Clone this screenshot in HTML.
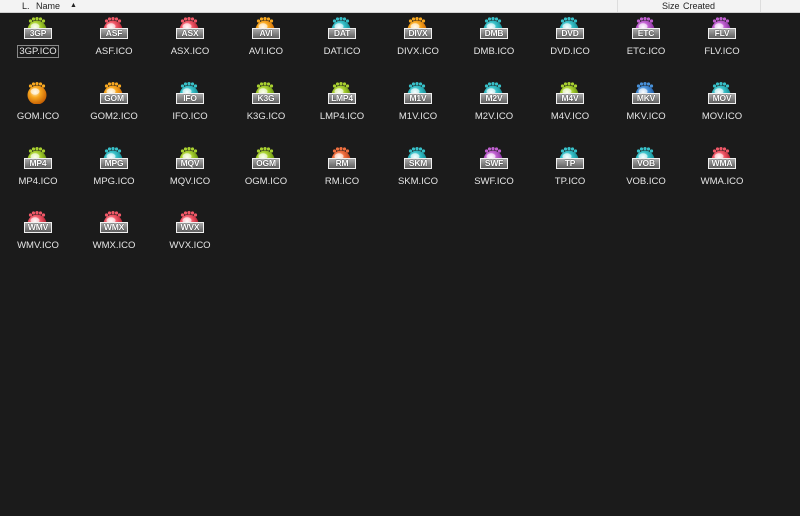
<!DOCTYPE html>
<html><head><meta charset="utf-8"><style>
body{margin:0;width:800px;height:516px;background:#1b1b1b;overflow:hidden;font-family:"Liberation Sans",sans-serif;position:relative}
.hd{position:absolute;left:0;top:0;width:800px;height:12px;background:#f3f3f3;border-bottom:1px solid #cfcfcf;font-size:9px;color:#222;line-height:12px}
.hd span{position:absolute;top:0}
.it{position:absolute;width:76px;text-align:center}
.ic{position:relative;width:28px;height:22px;margin:0 auto}
.ic svg{position:absolute;left:0;top:0}
.tag{position:absolute;left:0;top:11px;width:26px;height:9px;border:1px solid #f0f0f0;background:linear-gradient(#a8a8a8,#606060);color:#fff;font-size:8.5px;font-weight:bold;line-height:9px;text-align:center;text-shadow:0 0 1px #000;letter-spacing:-.2px}
.lb{color:#e6e6e6;font-size:9.5px;margin-top:7px;line-height:11px}
.sel{display:inline-block;border:1px solid #888;padding:0 1px;margin-top:-1px}
</style></head><body>
<div class="hd"><span style="left:22px">L.</span><span style="left:36px">Name</span><span style="left:70px;font-size:7px">▲</span><span style="left:617px;height:12px;border-left:1px solid #ddd"></span><span style="left:662px">Size</span><span style="left:683px">Created</span><span style="left:760px;height:12px;border-left:1px solid #ddd"></span></div>
<svg width="0" height="0" style="position:absolute">
<defs>
<radialGradient id="gg" cx=".4" cy=".35" r=".7"><stop offset="0" stop-color="#f4ffd0"/><stop offset=".4" stop-color="#a8d030"/><stop offset="1" stop-color="#4f7a08"/></radialGradient>
<radialGradient id="gr" cx=".4" cy=".35" r=".7"><stop offset="0" stop-color="#fff0f0"/><stop offset=".4" stop-color="#f05868"/><stop offset="1" stop-color="#a01020"/></radialGradient>
<radialGradient id="go" cx=".4" cy=".35" r=".7"><stop offset="0" stop-color="#fff4d0"/><stop offset=".4" stop-color="#f8a820"/><stop offset="1" stop-color="#c05800"/></radialGradient>
<radialGradient id="gt" cx=".4" cy=".35" r=".7"><stop offset="0" stop-color="#e8ffff"/><stop offset=".4" stop-color="#38c0c8"/><stop offset="1" stop-color="#087880"/></radialGradient>
<radialGradient id="gp" cx=".4" cy=".35" r=".7"><stop offset="0" stop-color="#fff0ff"/><stop offset=".4" stop-color="#c060d0"/><stop offset="1" stop-color="#702088"/></radialGradient>
<radialGradient id="gb" cx=".4" cy=".35" r=".7"><stop offset="0" stop-color="#f0f8ff"/><stop offset=".4" stop-color="#4890d8"/><stop offset="1" stop-color="#104890"/></radialGradient>
<radialGradient id="gm" cx=".4" cy=".35" r=".7"><stop offset="0" stop-color="#fff0e0"/><stop offset=".4" stop-color="#f07040"/><stop offset="1" stop-color="#a83010"/></radialGradient>
<g id="dots"><circle cx="6.5" cy="4" r="1.6"/><circle cx="9.5" cy="2" r="1.6"/><circle cx="13" cy="1.6" r="1.6"/><circle cx="16.5" cy="2" r="1.6"/><circle cx="19.5" cy="4" r="1.6"/></g>
<symbol id="d-g" viewBox="0 0 28 22"><use href="#dots" fill="#a8d030"/><circle cx="13" cy="13" r="9.5" fill="url(#gg)"/><ellipse cx="11" cy="9.5" rx="4.5" ry="3.2" fill="#fff" opacity=".6"/></symbol>
<symbol id="d-r" viewBox="0 0 28 22"><use href="#dots" fill="#f05868"/><circle cx="13" cy="13" r="9.5" fill="url(#gr)"/><ellipse cx="11" cy="9.5" rx="4.5" ry="3.2" fill="#fff" opacity=".6"/></symbol>
<symbol id="d-o" viewBox="0 0 28 22"><use href="#dots" fill="#f8a820"/><circle cx="13" cy="13" r="9.5" fill="url(#go)"/><ellipse cx="11" cy="9.5" rx="4.5" ry="3.2" fill="#fff" opacity=".6"/></symbol>
<symbol id="d-t" viewBox="0 0 28 22"><use href="#dots" fill="#38c0c8"/><circle cx="13" cy="13" r="9.5" fill="url(#gt)"/><ellipse cx="11" cy="9.5" rx="4.5" ry="3.2" fill="#fff" opacity=".6"/></symbol>
<symbol id="d-p" viewBox="0 0 28 22"><use href="#dots" fill="#c060d0"/><circle cx="13" cy="13" r="9.5" fill="url(#gp)"/><ellipse cx="11" cy="9.5" rx="4.5" ry="3.2" fill="#fff" opacity=".6"/></symbol>
<symbol id="d-b" viewBox="0 0 28 22"><use href="#dots" fill="#4890d8"/><circle cx="13" cy="13" r="9.5" fill="url(#gb)"/><ellipse cx="11" cy="9.5" rx="4.5" ry="3.2" fill="#fff" opacity=".6"/></symbol>
<symbol id="d-m" viewBox="0 0 28 22"><use href="#dots" fill="#f07040"/><circle cx="13" cy="13" r="9.5" fill="url(#gm)"/><ellipse cx="11" cy="9.5" rx="4.5" ry="3.2" fill="#fff" opacity=".6"/></symbol>
</defs></svg>

<div class="it" style="left:0;top:17px"><div class="ic"><svg width="28" height="22"><use href="#d-g"/></svg><span class="tag">3GP</span></div><div class="lb"><span class="sel">3GP.ICO</span></div></div>
<div class="it" style="left:76px;top:17px"><div class="ic"><svg width="28" height="22"><use href="#d-r"/></svg><span class="tag">ASF</span></div><div class="lb">ASF.ICO</div></div>
<div class="it" style="left:152px;top:17px"><div class="ic"><svg width="28" height="22"><use href="#d-r"/></svg><span class="tag">ASX</span></div><div class="lb">ASX.ICO</div></div>
<div class="it" style="left:228px;top:17px"><div class="ic"><svg width="28" height="22"><use href="#d-o"/></svg><span class="tag">AVI</span></div><div class="lb">AVI.ICO</div></div>
<div class="it" style="left:304px;top:17px"><div class="ic"><svg width="28" height="22"><use href="#d-t"/></svg><span class="tag">DAT</span></div><div class="lb">DAT.ICO</div></div>
<div class="it" style="left:380px;top:17px"><div class="ic"><svg width="28" height="22"><use href="#d-o"/></svg><span class="tag">DIVX</span></div><div class="lb">DIVX.ICO</div></div>
<div class="it" style="left:456px;top:17px"><div class="ic"><svg width="28" height="22"><use href="#d-t"/></svg><span class="tag">DMB</span></div><div class="lb">DMB.ICO</div></div>
<div class="it" style="left:532px;top:17px"><div class="ic"><svg width="28" height="22"><use href="#d-t"/></svg><span class="tag">DVD</span></div><div class="lb">DVD.ICO</div></div>
<div class="it" style="left:608px;top:17px"><div class="ic"><svg width="28" height="22"><use href="#d-p"/></svg><span class="tag">ETC</span></div><div class="lb">ETC.ICO</div></div>
<div class="it" style="left:684px;top:17px"><div class="ic"><svg width="28" height="22"><use href="#d-p"/></svg><span class="tag">FLV</span></div><div class="lb">FLV.ICO</div></div>

<div class="it" style="left:0;top:82px"><div class="ic"><svg width="28" height="22"><use href="#d-o"/></svg></div><div class="lb">GOM.ICO</div></div>
<div class="it" style="left:76px;top:82px"><div class="ic"><svg width="28" height="22"><use href="#d-o"/></svg><span class="tag">GOM</span></div><div class="lb">GOM2.ICO</div></div>
<div class="it" style="left:152px;top:82px"><div class="ic"><svg width="28" height="22"><use href="#d-t"/></svg><span class="tag">IFO</span></div><div class="lb">IFO.ICO</div></div>
<div class="it" style="left:228px;top:82px"><div class="ic"><svg width="28" height="22"><use href="#d-g"/></svg><span class="tag">K3G</span></div><div class="lb">K3G.ICO</div></div>
<div class="it" style="left:304px;top:82px"><div class="ic"><svg width="28" height="22"><use href="#d-g"/></svg><span class="tag">LMP4</span></div><div class="lb">LMP4.ICO</div></div>
<div class="it" style="left:380px;top:82px"><div class="ic"><svg width="28" height="22"><use href="#d-t"/></svg><span class="tag">M1V</span></div><div class="lb">M1V.ICO</div></div>
<div class="it" style="left:456px;top:82px"><div class="ic"><svg width="28" height="22"><use href="#d-t"/></svg><span class="tag">M2V</span></div><div class="lb">M2V.ICO</div></div>
<div class="it" style="left:532px;top:82px"><div class="ic"><svg width="28" height="22"><use href="#d-g"/></svg><span class="tag">M4V</span></div><div class="lb">M4V.ICO</div></div>
<div class="it" style="left:608px;top:82px"><div class="ic"><svg width="28" height="22"><use href="#d-b"/></svg><span class="tag">MKV</span></div><div class="lb">MKV.ICO</div></div>
<div class="it" style="left:684px;top:82px"><div class="ic"><svg width="28" height="22"><use href="#d-t"/></svg><span class="tag">MOV</span></div><div class="lb">MOV.ICO</div></div>

<div class="it" style="left:0;top:147px"><div class="ic"><svg width="28" height="22"><use href="#d-g"/></svg><span class="tag">MP4</span></div><div class="lb">MP4.ICO</div></div>
<div class="it" style="left:76px;top:147px"><div class="ic"><svg width="28" height="22"><use href="#d-t"/></svg><span class="tag">MPG</span></div><div class="lb">MPG.ICO</div></div>
<div class="it" style="left:152px;top:147px"><div class="ic"><svg width="28" height="22"><use href="#d-g"/></svg><span class="tag">MQV</span></div><div class="lb">MQV.ICO</div></div>
<div class="it" style="left:228px;top:147px"><div class="ic"><svg width="28" height="22"><use href="#d-g"/></svg><span class="tag">OGM</span></div><div class="lb">OGM.ICO</div></div>
<div class="it" style="left:304px;top:147px"><div class="ic"><svg width="28" height="22"><use href="#d-m"/></svg><span class="tag">RM</span></div><div class="lb">RM.ICO</div></div>
<div class="it" style="left:380px;top:147px"><div class="ic"><svg width="28" height="22"><use href="#d-t"/></svg><span class="tag">SKM</span></div><div class="lb">SKM.ICO</div></div>
<div class="it" style="left:456px;top:147px"><div class="ic"><svg width="28" height="22"><use href="#d-p"/></svg><span class="tag">SWF</span></div><div class="lb">SWF.ICO</div></div>
<div class="it" style="left:532px;top:147px"><div class="ic"><svg width="28" height="22"><use href="#d-t"/></svg><span class="tag">TP</span></div><div class="lb">TP.ICO</div></div>
<div class="it" style="left:608px;top:147px"><div class="ic"><svg width="28" height="22"><use href="#d-t"/></svg><span class="tag">VOB</span></div><div class="lb">VOB.ICO</div></div>
<div class="it" style="left:684px;top:147px"><div class="ic"><svg width="28" height="22"><use href="#d-r"/></svg><span class="tag">WMA</span></div><div class="lb">WMA.ICO</div></div>

<div class="it" style="left:0;top:211px"><div class="ic"><svg width="28" height="22"><use href="#d-r"/></svg><span class="tag">WMV</span></div><div class="lb">WMV.ICO</div></div>
<div class="it" style="left:76px;top:211px"><div class="ic"><svg width="28" height="22"><use href="#d-r"/></svg><span class="tag">WMX</span></div><div class="lb">WMX.ICO</div></div>
<div class="it" style="left:152px;top:211px"><div class="ic"><svg width="28" height="22"><use href="#d-r"/></svg><span class="tag">WVX</span></div><div class="lb">WVX.ICO</div></div>
</body></html>
